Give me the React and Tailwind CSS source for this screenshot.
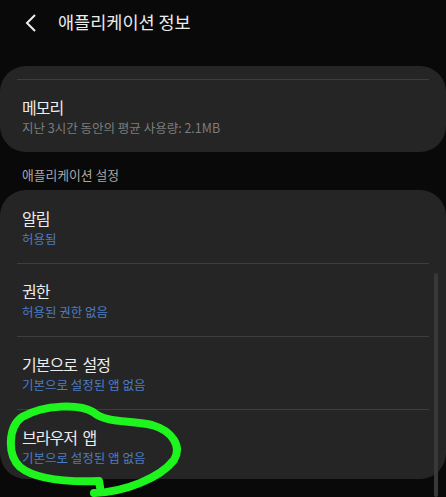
import React from "react";

const font = { fontFamily: '"Noto Sans CJK KR", "Noto Sans", sans-serif' };

function Row({ title, sub, blue, first }) {
  return (
    <div className={first ? "h-[73px] pt-[18px]" : "h-[72px] pt-[17px]"}>
      <div className="px-[22px] text-[16px] leading-[20px] tracking-[-1px] [word-spacing:3px] text-[#ececec]">
        {title}
      </div>
      <div
        className={
          "mt-[3px] px-[22px] text-[12.5px] leading-[16px] " +
          (blue ? "text-[#4c7dc2]" : "text-[#7c7c7c]")
        }
      >
        {sub}
      </div>
    </div>
  );
}

function Divider() {
  return <div className="mx-[17px] h-px bg-[#3e3e3e]" />;
}

export default function App() {
  return (
    <div className="relative min-h-screen overflow-hidden bg-[#090909]" style={font}>
      {/* header */}
      <div className="flex h-[45px] items-center pl-[24px]">
        <svg width="14" height="20" viewBox="0 0 14 20" className="mr-[20px]">
          <path d="M11 2 L3 10 L11 18" fill="none" stroke="#eeeeee" strokeWidth="2" />
        </svg>
        <span className="text-[17.5px] text-[#ececec]">애플리케이션 정보</span>
      </div>

      {/* memory card */}
      <div className="mt-[21px] h-[86px] rounded-[26px] bg-[#252525]">
        <div className="h-[13px]" />
        <Divider />
        <Row title="메모리" sub="지난 3시간 동안의 평균 사용량: 2.1MB" />
      </div>

      <div className="px-[22px] pt-[15px] pb-[6px] text-[12.8px] leading-[16px] text-[#a8a8a8]">
        애플리케이션 설정
      </div>

      {/* app settings card */}
      <div className="mt-[1px] rounded-[26px] bg-[#252525] pb-px">
        <Row first title="알림" sub="허용됨" blue />
        <Divider />
        <Row title="권한" sub="허용된 권한 없음" blue />
        <Divider />
        <Row title="기본으로 설정" sub="기본으로 설정된 앱 없음" blue />
        <Divider />
        <div className="h-[68px]">
          <Row title="브라우저 앱" sub="기본으로 설정된 앱 없음" blue />
        </div>
      </div>

      {/* scrollbar */}
      <div className="absolute right-[8px] top-[273px] bottom-0 w-[4px] rounded-full bg-[#383838]" />

      {/* green annotation */}
      <svg className="pointer-events-none absolute left-0 top-0" width="446" height="497">
        <path
          d="M94 493 C 125 492, 160 478, 174 460 C 182 447, 173 431, 152 425 C 126 420, 106 423, 93 412 C 80 404, 45 404, 22 417 C 8 427, 7 455, 20 467 C 36 480, 70 482, 99 481 L 100 487"
          fill="none"
          stroke="#1ef41e"
          strokeWidth="8"
          strokeLinecap="round"
          strokeLinejoin="round"
        />
      </svg>
    </div>
  );
}
